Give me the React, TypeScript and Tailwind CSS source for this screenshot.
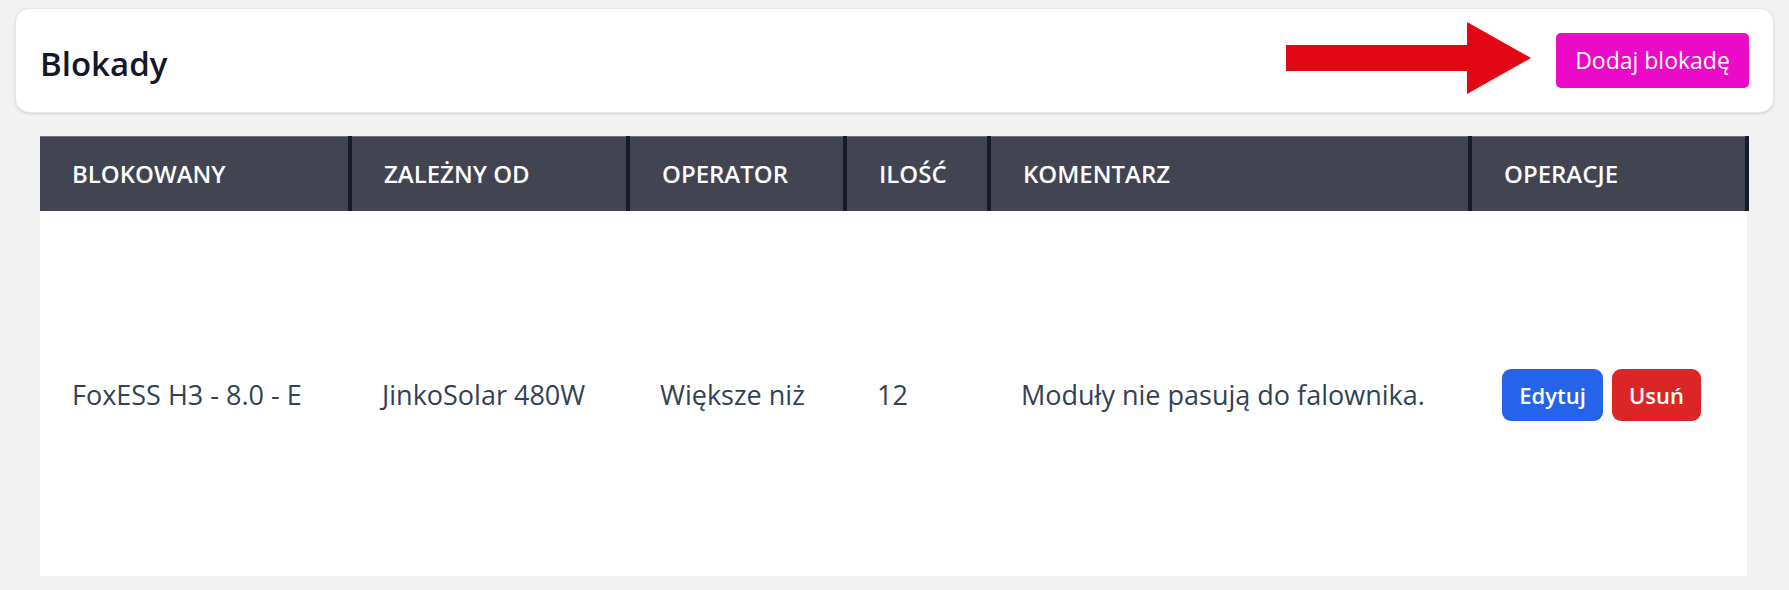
import React from "react";

const COLS = [
  { label: "Blokowany", width: "w-[310px]" },
  { label: "Zależny od", width: "w-[278px]" },
  { label: "Operator", width: "w-[217px]" },
  { label: "Ilość", width: "w-[144px]" },
  { label: "Komentarz", width: "w-[481px]" },
  { label: "Operacje", width: "w-[277px]" },
];

const ROWS = [
  {
    id: 1,
    blocked: "FoxESS H3 - 8.0 - E",
    dependsOn: "JinkoSolar 480W",
    operator: "Większe niż",
    amount: "12",
    comment: "Moduły nie pasują do falownika.",
  },
];

function Arrow() {
  return (
    <svg width="245" height="72" viewBox="0 0 245 72" className="-mb-[6px] -mt-[11px] shrink-0">
      <path d="M0 23 H181 V0 L245 36 L181 72 V49 H0 Z" fill="#e20714" />
    </svg>
  );
}

export default function App() {
  return (
    <div className="min-h-[590px] bg-[#f2f2f2] px-[15px] pt-[8px] font-['Open_Sans',sans-serif]">
      {/* Header */}
      <div className="flex items-center justify-between rounded-[14px] border border-[#e6e6e6] bg-white p-6 shadow-sm">
        <h1 className="mt-[6px] text-[33px] font-[550] leading-none text-[#111827]">Blokady</h1>
        <div className="flex items-center gap-[25px]">
          <Arrow />
          <button className="h-[55px] w-[193px] rounded-[5px] bg-[#ea0ac8] text-[23px] text-white">
            Dodaj blokadę
          </button>
        </div>
      </div>

      {/* Table */}
      <div className="mx-[25px] mt-[23px]">
        <table className="w-full table-fixed border-collapse">
          <colgroup>
            {COLS.map((c) => (
              <col key={c.label} className={c.width} />
            ))}
          </colgroup>
          <thead>
            <tr className="h-[74px] bg-[#424451]">
              {COLS.map((c) => (
                <th
                  key={c.label}
                  className="border-r-4 border-t border-r-[#151b29] border-t-[#70707a] px-8 text-left text-[24px] font-semibold uppercase text-white"
                >
                  {c.label}
                </th>
              ))}
            </tr>
          </thead>
          <tbody className="bg-white text-[27px] text-[#334155]">
            {ROWS.map((r) => (
              <tr key={r.id} className="h-[365px]">
                <td className="px-8 pt-[4px]">{r.blocked}</td>
                <td className="px-8 pt-[4px]">{r.dependsOn}</td>
                <td className="px-8 pt-[4px]">{r.operator}</td>
                <td className="px-8 pt-[4px]">{r.amount}</td>
                <td className="px-8 pt-[4px]">{r.comment}</td>
                <td className="px-8 pt-[4px]">
                  <div className="flex gap-[9px]">
                    <button className="h-[52px] w-[101px] rounded-[9px] bg-[#2563eb] text-[22px] font-semibold text-white">
                      Edytuj
                    </button>
                    <button className="h-[52px] w-[89px] rounded-[9px] bg-[#dc2626] text-[22px] font-semibold text-white">
                      Usuń
                    </button>
                  </div>
                </td>
              </tr>
            ))}
          </tbody>
        </table>
      </div>
    </div>
  );
}
